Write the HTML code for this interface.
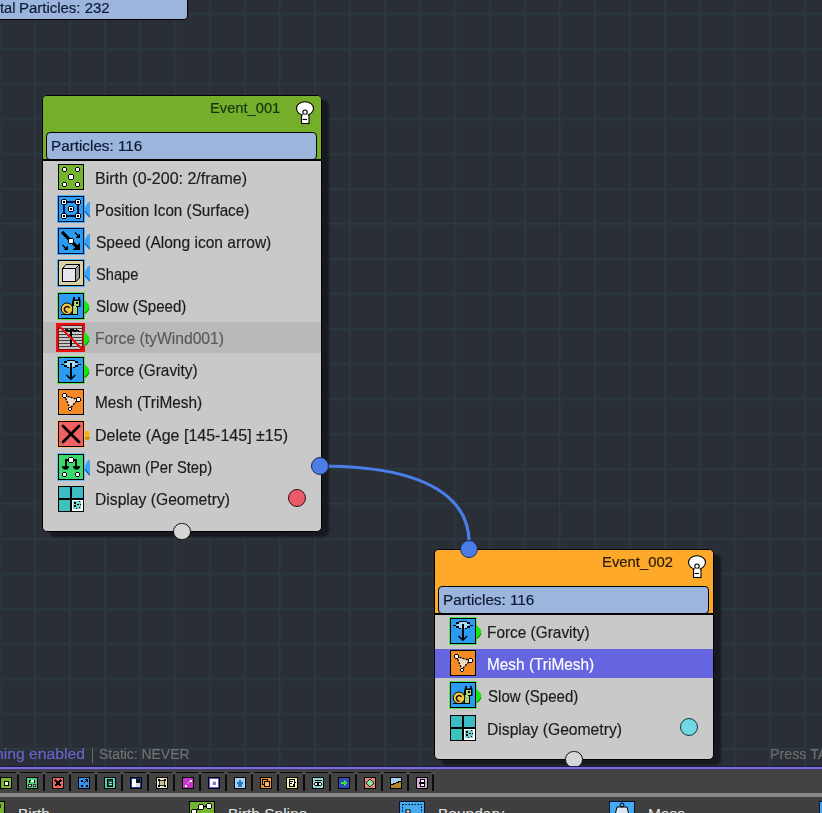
<!DOCTYPE html>
<html><head><meta charset="utf-8"><style>
html,body{margin:0;padding:0;}
body{width:822px;height:813px;overflow:hidden;position:relative;background:#2a2f37;font-family:"Liberation Sans", sans-serif;}
.grid{position:absolute;left:0;top:0;width:822px;height:767px;
 background-image:
  linear-gradient(to right, #2c3b3f 0, #2c3b3f 1px, #29333a 1px, #29333a 3px, transparent 3px),
  linear-gradient(to bottom, #2c3b3f 0, #2c3b3f 1px, #29333a 1px, #29333a 3px, transparent 3px);
 background-size:35px 35px, 35px 35px;
 background-position:34px 0, 0 13px;}
.t{position:absolute;white-space:nowrap;line-height:normal;}
.ic{position:absolute;display:block;}
.ring{position:absolute;width:28px;height:28px;}
.shadow{position:absolute;background:rgba(14,16,20,0.7);border-radius:6px;filter:blur(1px);}
.node{position:absolute;box-sizing:border-box;border:1px solid #000;border-radius:5px;overflow:hidden;background:#c9c9c9;}
.hdr{position:absolute;left:0;top:0;right:0;height:64px;}
.pbox{position:absolute;left:3px;top:36px;width:271px;height:28px;box-sizing:border-box;border:1px solid #000;border-radius:4px;background:#9bb5dd;}
.list{position:absolute;left:0;right:0;top:63px;height:2px;background:#000;}
</style></head><body>
<div class="grid"></div>

<div style="position:absolute;left:-10px;top:-5px;width:198px;height:25px;box-sizing:border-box;background:#9bb5dd;border:1px solid #000;border-radius:4px;"></div>
<div class="t" style="left:18.72px;top:-1.45px;font-size:15.3px;color:#0d1a33;transform:scaleX(0.9773);transform-origin:0 0;-webkit-text-stroke:0.2px #0d1a33;">Particles: 232</div>
<div class="t" style="left:-0.50px;top:-1.45px;font-size:15.3px;color:#0d1a33;transform:scaleX(0.9519);transform-origin:0 0;-webkit-text-stroke:0.2px #0d1a33;">tal</div>
<div class="shadow" style="left:49px;top:100px;width:280px;height:437px"></div><div class="node" style="left:42px;top:95px;width:280px;height:437px"><div class="hdr" style="background:#74ae2a"></div><div class="pbox"></div><div class="list"></div></div>
<div style="position:absolute;left:43px;top:322px;width:278px;height:31px;background:#b9b9b9"></div>
<div class="t" style="left:210.04px;top:99.46px;font-size:15.4px;color:#163410;transform:scaleX(0.9551);transform-origin:0 0;-webkit-text-stroke:0.2px #163410;">Event_001</div>
<div class="t" style="left:50.80px;top:136.85px;font-size:15.3px;color:#0d1a33;transform:scaleX(0.9974);transform-origin:0 0;-webkit-text-stroke:0.2px #0d1a33;">Particles: 116</div>
<svg class="ic" style="left:58px;top:164px" width="26" height="26" viewBox="0 0 26 26"><rect x="0" y="0" width="26" height="26" fill="#000"/><rect x="1" y="1" width="24" height="24" fill="#74b42e"/><path shape-rendering="crispEdges" d="M5,3H8V4H9V7H8V8H5V7H4V4H5Z" fill="#000"/><rect x="5" y="4" width="3" height="3" fill="#fff"/><path shape-rendering="crispEdges" d="M18,3H21V4H22V7H21V8H18V7H17V4H18Z" fill="#000"/><rect x="18" y="4" width="3" height="3" fill="#fff"/><path shape-rendering="crispEdges" d="M11,10H15V11H16V15H15V16H11V15H10V11H11Z" fill="#000"/><rect x="11" y="11" width="4" height="4" fill="#fff"/><path shape-rendering="crispEdges" d="M5,18H8V19H9V22H8V23H5V22H4V19H5Z" fill="#000"/><rect x="5" y="19" width="3" height="3" fill="#fff"/><path shape-rendering="crispEdges" d="M18,18H21V19H22V22H21V23H18V22H17V19H18Z" fill="#000"/><rect x="18" y="19" width="3" height="3" fill="#fff"/></svg>
<div class="t" style="left:95.41px;top:169.34px;font-size:16.2px;color:#1c1c1c;transform:scaleX(0.9879);transform-origin:0 0;-webkit-text-stroke:0.18px #1c1c1c;">Birth (0-200: 2/frame)</div>
<div class="ring" style="left:57px;top:195px;background:#4aaef2"></div><svg class="ic" style="left:58px;top:196px" width="26" height="26" viewBox="0 0 26 26"><rect x="0" y="0" width="26" height="26" fill="#001040"/><rect x="1" y="1" width="24" height="24" fill="#2c9cf0"/><rect x="8" y="5" width="10" height="2" fill="#001040"/><rect x="8" y="19" width="10" height="2" fill="#001040"/><rect x="5" y="8" width="2" height="10" fill="#001040"/><rect x="19" y="8" width="2" height="10" fill="#001040"/><path shape-rendering="crispEdges" d="M4,3H8V4H9V8H8V9H4V8H3V4H4Z" fill="#000"/><rect x="4" y="4" width="4" height="4" fill="#fff"/><rect x="5.0" y="5.0" width="2" height="2" fill="#000"/><path shape-rendering="crispEdges" d="M18,3H22V4H23V8H22V9H18V8H17V4H18Z" fill="#000"/><rect x="18" y="4" width="4" height="4" fill="#fff"/><rect x="19.0" y="5.0" width="2" height="2" fill="#000"/><path shape-rendering="crispEdges" d="M4,17H8V18H9V22H8V23H4V22H3V18H4Z" fill="#000"/><rect x="4" y="18" width="4" height="4" fill="#fff"/><rect x="5.0" y="19.0" width="2" height="2" fill="#000"/><path shape-rendering="crispEdges" d="M18,17H22V18H23V22H22V23H18V22H17V18H18Z" fill="#000"/><rect x="18" y="18" width="4" height="4" fill="#fff"/><rect x="19.0" y="19.0" width="2" height="2" fill="#000"/><path shape-rendering="crispEdges" d="M11,10H15V11H16V15H15V16H11V15H10V11H11Z" fill="#000"/><rect x="11" y="11" width="4" height="4" fill="#fff"/><rect x="12.0" y="12.0" width="2" height="2" fill="#000"/></svg>
<svg class="ic" style="left:84px;top:202px" width="7" height="16" viewBox="0 0 7 16"><path d="M4,0.3H6V15.2Q3,12 0.8,9V6Z" fill="#3aa2f4"/><path d="M1,9.3Q3.2,12.3 5.8,15.2" stroke="#0a58b0" stroke-width="1.1" fill="none"/></svg>
<div class="t" style="left:95.46px;top:201.34px;font-size:16.2px;color:#1c1c1c;transform:scaleX(0.9424);transform-origin:0 0;-webkit-text-stroke:0.18px #1c1c1c;">Position Icon (Surface)</div>
<div class="ring" style="left:57px;top:227px;background:#4aaef2"></div><svg class="ic" style="left:58px;top:228px" width="26" height="26" viewBox="0 0 26 26"><rect x="0" y="0" width="26" height="26" fill="#001040"/><rect x="1" y="1" width="24" height="24" fill="#2c9cf0"/><path d="M4,5L5,4L11,10L10,11Z" fill="#000" stroke="#000" stroke-width="1.6"/><path d="M15,16L16,15L19.5,18.5L18.5,19.5Z" fill="#000" stroke="#000" stroke-width="1.6"/><path d="M22,14.5V22H14.5Z" fill="#000"/><path d="M17,4.5L20,7.5M4.5,17L7.5,20" stroke="#000" stroke-width="1.4"/><path d="M22,5.5V10H17.5Z M10,17.5V22H5.5Z" fill="#000"/><path shape-rendering="crispEdges" d="M11,10H15V11H16V15H15V16H11V15H10V11H11Z" fill="#000"/><rect x="11" y="11" width="4" height="4" fill="#fff"/></svg>
<svg class="ic" style="left:84px;top:234px" width="7" height="16" viewBox="0 0 7 16"><path d="M4,0.3H6V15.2Q3,12 0.8,9V6Z" fill="#3aa2f4"/><path d="M1,9.3Q3.2,12.3 5.8,15.2" stroke="#0a58b0" stroke-width="1.1" fill="none"/></svg>
<div class="t" style="left:96.40px;top:233.34px;font-size:16.2px;color:#1c1c1c;transform:scaleX(0.9596);transform-origin:0 0;-webkit-text-stroke:0.18px #1c1c1c;">Speed (Along icon arrow)</div>
<div class="ring" style="left:57px;top:259px;background:#4aaef2"></div><svg class="ic" style="left:58px;top:260px" width="26" height="26" viewBox="0 0 26 26"><rect x="0" y="0" width="26" height="26" fill="#000"/><rect x="1" y="1" width="24" height="24" fill="#d9d2a8"/><path d="M8,4.5H21.5L17.5,8.5H4.5Z" fill="#d6d6d6" stroke="#000" stroke-width="1"/><path d="M17.5,8.5L21.5,4.5V18L17.5,22Z" fill="#9c9c9c" stroke="#000" stroke-width="1"/><rect x="4" y="8" width="14" height="14" fill="#000"/><rect x="5" y="9" width="12" height="12" fill="#e9e5ec"/></svg>
<svg class="ic" style="left:84px;top:266px" width="7" height="16" viewBox="0 0 7 16"><path d="M4,0.3H6V15.2Q3,12 0.8,9V6Z" fill="#3aa2f4"/><path d="M1,9.3Q3.2,12.3 5.8,15.2" stroke="#0a58b0" stroke-width="1.1" fill="none"/></svg>
<div class="t" style="left:96.40px;top:265.34px;font-size:16.2px;color:#1c1c1c;transform:scaleX(0.9037);transform-origin:0 0;-webkit-text-stroke:0.18px #1c1c1c;">Shape</div>
<div class="ring" style="left:57px;top:292px;background:#5ae05a"></div><svg class="ic" style="left:58px;top:293px" width="26" height="26" viewBox="0 0 26 26"><rect x="0" y="0" width="26" height="26" fill="#000"/><rect x="1" y="1" width="24" height="24" fill="#2c9cf0"/><rect x="15" y="4" width="2" height="3" fill="#001030"/><rect x="20" y="4" width="2" height="3" fill="#001030"/><path d="M14.5,6.5H22.5V14H20V21.5H13.5V14Z" fill="#000"/><rect x="16" y="8" width="5" height="5" fill="#a8d67c"/><rect x="15" y="13" width="4" height="8" fill="#a8d67c"/><rect x="18" y="9" width="2" height="2" fill="#000"/><rect x="18" y="13" width="3" height="1" fill="#000"/><circle cx="9" cy="15.8" r="5.8" fill="#f4c640" stroke="#000" stroke-width="1"/><path d="M9.5,19.2A2.8,2.8 0 1 1 11.5,14.8" fill="none" stroke="#000" stroke-width="1.4"/><rect x="3" y="21" width="17" height="1" fill="#000"/></svg>
<svg class="ic" style="left:84px;top:299.5px" width="7" height="16" viewBox="0 0 7 16"><path d="M0,0Q4.5,3 5.5,6.5Q5,11 0,14Z" fill="#18e418"/><path d="M5.2,8.5Q3.8,11.5 0.8,13.5" stroke="#0a9a0a" stroke-width="1.2" fill="none"/></svg>
<div class="t" style="left:96.40px;top:297.34px;font-size:16.2px;color:#1c1c1c;transform:scaleX(0.9299);transform-origin:0 0;-webkit-text-stroke:0.18px #1c1c1c;">Slow (Speed)</div>
<svg class="ic" style="left:56px;top:323px" width="29" height="29" viewBox="0 0 29 29" shape-rendering="crispEdges"><rect x="0" y="0" width="29" height="29" fill="#ee1010"/><rect x="2" y="2" width="25" height="25" fill="#7a1010"/><rect x="3" y="3" width="23" height="23" fill="#c8c8c8"/><rect x="3" y="5" width="23" height="1.2" fill="#404040"/><rect x="3" y="8" width="23" height="1.2" fill="#404040"/><rect x="3" y="11" width="23" height="1.2" fill="#404040"/><rect x="3" y="14" width="23" height="1.2" fill="#404040"/><rect x="3" y="17" width="23" height="1.2" fill="#404040"/><rect x="3" y="20" width="23" height="1.2" fill="#404040"/><rect x="3" y="23" width="23" height="1.2" fill="#404040"/><path d="M7,9Q10,5.5 13,8Q16,5.5 19,8Q21,6 23,9" stroke="#000" stroke-width="1.6" fill="none"/><rect x="13.5" y="8" width="2" height="15" fill="#000"/><path d="M2.5,2.5L26.5,26.5" stroke="#ee1010" stroke-width="2.2"/></svg>
<svg class="ic" style="left:84px;top:331.5px" width="7" height="16" viewBox="0 0 7 16"><path d="M0,0Q4.5,3 5.5,6.5Q5,11 0,14Z" fill="#18e418"/><path d="M5.2,8.5Q3.8,11.5 0.8,13.5" stroke="#0a9a0a" stroke-width="1.2" fill="none"/></svg>
<div class="t" style="left:95.43px;top:328.94px;font-size:16.2px;color:#5a5a5a;transform:scaleX(0.9693);transform-origin:0 0;-webkit-text-stroke:0.18px #5a5a5a;">Force (tyWind001)</div>
<div class="ring" style="left:57px;top:356px;background:#5ae05a"></div><svg class="ic" style="left:58px;top:357px" width="26" height="26" viewBox="0 0 26 26"><rect x="0" y="0" width="26" height="26" fill="#000"/><rect x="1" y="1" width="24" height="24" fill="#2c9cf0"/><ellipse cx="13" cy="7.2" rx="6.2" ry="3.4" fill="#a6dcf8"/><rect x="9" y="3" width="8" height="1" fill="#000"/><rect x="6" y="4" width="3" height="2" fill="#000"/><rect x="17" y="4" width="3" height="2" fill="#000"/><rect x="6" y="8" width="3" height="2" fill="#000"/><rect x="17" y="8" width="3" height="2" fill="#000"/><rect x="9" y="10" width="2" height="1" fill="#000"/><rect x="15" y="10" width="2" height="1" fill="#000"/><rect x="3" y="7" width="3" height="1" fill="#000"/><rect x="20" y="7" width="3" height="1" fill="#000"/><rect x="12" y="6" width="2" height="16" fill="#000"/><path d="M8.5,18L12.8,22.3L17.2,18" stroke="#000" stroke-width="1.5" fill="none"/></svg>
<svg class="ic" style="left:84px;top:363.5px" width="7" height="16" viewBox="0 0 7 16"><path d="M0,0Q4.5,3 5.5,6.5Q5,11 0,14Z" fill="#18e418"/><path d="M5.2,8.5Q3.8,11.5 0.8,13.5" stroke="#0a9a0a" stroke-width="1.2" fill="none"/></svg>
<div class="t" style="left:95.45px;top:361.34px;font-size:16.2px;color:#1c1c1c;transform:scaleX(0.9509);transform-origin:0 0;-webkit-text-stroke:0.18px #1c1c1c;">Force (Gravity)</div>
<svg class="ic" style="left:58px;top:389px" width="26" height="26" viewBox="0 0 26 26"><rect x="0" y="0" width="26" height="26" fill="#000"/><rect x="1" y="1" width="24" height="24" fill="#f38a26"/><path d="M6.5,6.5L20,10.5L12,19.5Z" fill="#f2dcc4" stroke="#000" stroke-width="1.4" stroke-dasharray="2 1.2"/><path shape-rendering="crispEdges" d="M5,4H8V5H9V8H8V9H5V8H4V5H5Z" fill="#000"/><rect x="5" y="5" width="3" height="3" fill="#fff"/><path shape-rendering="crispEdges" d="M19,8H22V9H23V12H22V13H19V12H18V9H19Z" fill="#000"/><rect x="19" y="9" width="3" height="3" fill="#fff"/><path shape-rendering="crispEdges" d="M11,18H13V19H14V21H13V22H11V21H10V19H11Z" fill="#000"/><rect x="11" y="19" width="2" height="2" fill="#fff"/></svg>
<div class="t" style="left:95.45px;top:393.34px;font-size:16.2px;color:#1c1c1c;transform:scaleX(0.9503);transform-origin:0 0;-webkit-text-stroke:0.18px #1c1c1c;">Mesh (TriMesh)</div>
<div class="ring" style="left:57px;top:420px;background:#f2c070"></div><svg class="ic" style="left:58px;top:421px" width="26" height="26" viewBox="0 0 26 26"><rect x="0" y="0" width="26" height="26" fill="#000"/><rect x="1" y="1" width="24" height="24" fill="#f26262"/><path d="M5,5L21,21M21,5L5,21" stroke="#000" stroke-width="2.8" stroke-linecap="round"/></svg>
<svg class="ic" style="left:85px;top:431px" width="5" height="9" viewBox="0 0 5 9"><rect x="0" y="0" width="4.5" height="8.5" fill="#f6b414"/><rect x="0" y="6" width="4.5" height="2.5" fill="#c08a10"/></svg>
<div class="t" style="left:95.41px;top:426.34px;font-size:16.2px;color:#1c1c1c;transform:scaleX(0.9888);transform-origin:0 0;-webkit-text-stroke:0.18px #1c1c1c;">Delete (Age [145-145] ±15)</div>
<div class="ring" style="left:57px;top:453px;background:#6ab8f0"></div><svg class="ic" style="left:58px;top:454px" width="26" height="26" viewBox="0 0 26 26"><rect x="0" y="0" width="26" height="26" fill="#000"/><rect x="1" y="1" width="24" height="24" fill="#3ad86e"/><rect x="7" y="5" width="12" height="2" fill="#000"/><rect x="7" y="5" width="2" height="8" fill="#000"/><rect x="17" y="5" width="2" height="8" fill="#000"/><path d="M4,12.3H11V13.5L9,15.5H6L4,13.5Z M15,12.3H22V13.5L20,15.5H17L15,13.5Z" fill="#000"/><path shape-rendering="crispEdges" d="M11,3H15V4H16V8H15V9H11V8H10V4H11Z" fill="#000"/><rect x="11" y="4" width="4" height="4" fill="#fff"/><path shape-rendering="crispEdges" d="M5,18H8V19H9V22H8V23H5V22H4V19H5Z" fill="#000"/><rect x="5" y="19" width="3" height="3" fill="#fff"/><path shape-rendering="crispEdges" d="M18,18H21V19H22V22H21V23H18V22H17V19H18Z" fill="#000"/><rect x="18" y="19" width="3" height="3" fill="#fff"/></svg>
<svg class="ic" style="left:84px;top:460px" width="7" height="16" viewBox="0 0 7 16"><path d="M4,0.3H6V15.2Q3,12 0.8,9V6Z" fill="#3aa2f4"/><path d="M1,9.3Q3.2,12.3 5.8,15.2" stroke="#0a58b0" stroke-width="1.1" fill="none"/></svg>
<div class="t" style="left:96.40px;top:458.34px;font-size:16.2px;color:#1c1c1c;transform:scaleX(0.9084);transform-origin:0 0;-webkit-text-stroke:0.18px #1c1c1c;">Spawn (Per Step)</div>
<svg class="ic" style="left:58px;top:486px" width="26" height="26" viewBox="0 0 26 26"><rect x="0" y="0" width="26" height="26" fill="#000"/><rect x="1" y="1" width="11" height="11" fill="#3cbcc4"/><rect x="14" y="1" width="11" height="11" fill="#3cbcc4"/><rect x="1" y="14" width="11" height="11" fill="#3cc4bc"/><rect x="14" y="14" width="11" height="11" fill="#fff"/><rect x="15" y="15" width="8" height="8" fill="#78d0d0"/><rect x="16" y="16" width="2" height="2" fill="#000"/><rect x="16" y="19" width="2" height="2" fill="#000"/><rect x="19" y="18" width="2" height="1" fill="#000"/><rect x="21" y="15" width="1" height="1" fill="#000"/><rect x="22" y="18" width="1" height="1" fill="#000"/><rect x="21" y="21" width="1" height="1" fill="#000"/><rect x="18" y="22" width="1" height="1" fill="#000"/></svg>
<div class="t" style="left:95.43px;top:490.34px;font-size:16.2px;color:#1c1c1c;transform:scaleX(0.9679);transform-origin:0 0;-webkit-text-stroke:0.18px #1c1c1c;">Display (Geometry)</div>
<div style="position:absolute;left:288px;top:489px;width:18px;height:18px;box-sizing:border-box;border-radius:50%;background:#e85b6b;border:1px solid #3a1010"></div>
<div style="position:absolute;left:173.3px;top:523px;width:17.4px;height:17.4px;box-sizing:border-box;border-radius:50%;background:#d6d6d6;border:1.4px solid #111"></div>
<div class="shadow" style="left:441px;top:554px;width:280px;height:211px"></div><div class="node" style="left:434px;top:549px;width:280px;height:211px"><div class="hdr" style="background:#fea92a"></div><div class="pbox"></div><div class="list"></div></div>
<div style="position:absolute;left:435px;top:649px;width:278px;height:29px;background:#6565e0"></div>
<div class="t" style="left:602.04px;top:553.46px;font-size:15.4px;color:#2a1c06;transform:scaleX(0.9648);transform-origin:0 0;-webkit-text-stroke:0.2px #2a1c06;">Event_002</div>
<div class="t" style="left:442.80px;top:590.85px;font-size:15.3px;color:#0d1a33;transform:scaleX(0.9974);transform-origin:0 0;-webkit-text-stroke:0.2px #0d1a33;">Particles: 116</div>
<div class="ring" style="left:449px;top:617px;background:#5ae05a"></div><svg class="ic" style="left:450px;top:618px" width="26" height="26" viewBox="0 0 26 26"><rect x="0" y="0" width="26" height="26" fill="#000"/><rect x="1" y="1" width="24" height="24" fill="#2c9cf0"/><ellipse cx="13" cy="7.2" rx="6.2" ry="3.4" fill="#a6dcf8"/><rect x="9" y="3" width="8" height="1" fill="#000"/><rect x="6" y="4" width="3" height="2" fill="#000"/><rect x="17" y="4" width="3" height="2" fill="#000"/><rect x="6" y="8" width="3" height="2" fill="#000"/><rect x="17" y="8" width="3" height="2" fill="#000"/><rect x="9" y="10" width="2" height="1" fill="#000"/><rect x="15" y="10" width="2" height="1" fill="#000"/><rect x="3" y="7" width="3" height="1" fill="#000"/><rect x="20" y="7" width="3" height="1" fill="#000"/><rect x="12" y="6" width="2" height="16" fill="#000"/><path d="M8.5,18L12.8,22.3L17.2,18" stroke="#000" stroke-width="1.5" fill="none"/></svg>
<svg class="ic" style="left:476px;top:624.5px" width="7" height="16" viewBox="0 0 7 16"><path d="M0,0Q4.5,3 5.5,6.5Q5,11 0,14Z" fill="#18e418"/><path d="M5.2,8.5Q3.8,11.5 0.8,13.5" stroke="#0a9a0a" stroke-width="1.2" fill="none"/></svg>
<div class="t" style="left:487.45px;top:623.34px;font-size:16.2px;color:#1c1c1c;transform:scaleX(0.9509);transform-origin:0 0;-webkit-text-stroke:0.18px #1c1c1c;">Force (Gravity)</div>
<svg class="ic" style="left:450px;top:650px" width="26" height="26" viewBox="0 0 26 26"><rect x="0" y="0" width="26" height="26" fill="#000"/><rect x="1" y="1" width="24" height="24" fill="#f38a26"/><path d="M6.5,6.5L20,10.5L12,19.5Z" fill="#f2dcc4" stroke="#000" stroke-width="1.4" stroke-dasharray="2 1.2"/><path shape-rendering="crispEdges" d="M5,4H8V5H9V8H8V9H5V8H4V5H5Z" fill="#000"/><rect x="5" y="5" width="3" height="3" fill="#fff"/><path shape-rendering="crispEdges" d="M19,8H22V9H23V12H22V13H19V12H18V9H19Z" fill="#000"/><rect x="19" y="9" width="3" height="3" fill="#fff"/><path shape-rendering="crispEdges" d="M11,18H13V19H14V21H13V22H11V21H10V19H11Z" fill="#000"/><rect x="11" y="19" width="2" height="2" fill="#fff"/></svg>
<div class="t" style="left:487.45px;top:655.34px;font-size:16.2px;color:#ffffff;transform:scaleX(0.9503);transform-origin:0 0;-webkit-text-stroke:0.18px #ffffff;">Mesh (TriMesh)</div>
<div class="ring" style="left:449px;top:681px;background:#5ae05a"></div><svg class="ic" style="left:450px;top:682px" width="26" height="26" viewBox="0 0 26 26"><rect x="0" y="0" width="26" height="26" fill="#000"/><rect x="1" y="1" width="24" height="24" fill="#2c9cf0"/><rect x="15" y="4" width="2" height="3" fill="#001030"/><rect x="20" y="4" width="2" height="3" fill="#001030"/><path d="M14.5,6.5H22.5V14H20V21.5H13.5V14Z" fill="#000"/><rect x="16" y="8" width="5" height="5" fill="#a8d67c"/><rect x="15" y="13" width="4" height="8" fill="#a8d67c"/><rect x="18" y="9" width="2" height="2" fill="#000"/><rect x="18" y="13" width="3" height="1" fill="#000"/><circle cx="9" cy="15.8" r="5.8" fill="#f4c640" stroke="#000" stroke-width="1"/><path d="M9.5,19.2A2.8,2.8 0 1 1 11.5,14.8" fill="none" stroke="#000" stroke-width="1.4"/><rect x="3" y="21" width="17" height="1" fill="#000"/></svg>
<svg class="ic" style="left:476px;top:688.5px" width="7" height="16" viewBox="0 0 7 16"><path d="M0,0Q4.5,3 5.5,6.5Q5,11 0,14Z" fill="#18e418"/><path d="M5.2,8.5Q3.8,11.5 0.8,13.5" stroke="#0a9a0a" stroke-width="1.2" fill="none"/></svg>
<div class="t" style="left:488.40px;top:687.34px;font-size:16.2px;color:#1c1c1c;transform:scaleX(0.9299);transform-origin:0 0;-webkit-text-stroke:0.18px #1c1c1c;">Slow (Speed)</div>
<svg class="ic" style="left:450px;top:715px" width="26" height="26" viewBox="0 0 26 26"><rect x="0" y="0" width="26" height="26" fill="#000"/><rect x="1" y="1" width="11" height="11" fill="#3cbcc4"/><rect x="14" y="1" width="11" height="11" fill="#3cbcc4"/><rect x="1" y="14" width="11" height="11" fill="#3cc4bc"/><rect x="14" y="14" width="11" height="11" fill="#fff"/><rect x="15" y="15" width="8" height="8" fill="#78d0d0"/><rect x="16" y="16" width="2" height="2" fill="#000"/><rect x="16" y="19" width="2" height="2" fill="#000"/><rect x="19" y="18" width="2" height="1" fill="#000"/><rect x="21" y="15" width="1" height="1" fill="#000"/><rect x="22" y="18" width="1" height="1" fill="#000"/><rect x="21" y="21" width="1" height="1" fill="#000"/><rect x="18" y="22" width="1" height="1" fill="#000"/></svg>
<div class="t" style="left:487.43px;top:719.54px;font-size:16.2px;color:#1c1c1c;transform:scaleX(0.9679);transform-origin:0 0;-webkit-text-stroke:0.18px #1c1c1c;">Display (Geometry)</div>
<div style="position:absolute;left:680px;top:718px;width:18px;height:18px;box-sizing:border-box;border-radius:50%;background:#6fd8e4;border:1px solid #103a40"></div>
<div style="position:absolute;left:565.3px;top:751px;width:17.4px;height:17.4px;box-sizing:border-box;border-radius:50%;background:#d6d6d6;border:1.4px solid #111"></div>
<svg class="ic" style="left:0;top:0" width="822" height="813"><path d="M320,466 C481,466 469,539 469,548.5" stroke="#4a7de8" stroke-width="3.2" fill="none"/><circle cx="320" cy="466" r="8.5" fill="#4a7de8" stroke="#1a2a50" stroke-width="1"/><circle cx="469" cy="549" r="8.5" fill="#4a7de8" stroke="#1a2a50" stroke-width="1"/></svg>
<svg class="ic" style="left:294.5px;top:99.5px" width="20" height="26" viewBox="0 0 20 26"><rect x="6.5" y="15" width="7.5" height="8.5" fill="#fff" stroke="#000" stroke-width="1.1"/><path d="M7.5,19.5H12" stroke="#000" stroke-width="1.1"/><ellipse cx="10" cy="8.5" rx="8.5" ry="6.8" fill="#fff" stroke="#000" stroke-width="1.1"/><circle cx="10" cy="12.2" r="2.2" fill="#fff" stroke="#000" stroke-width="1.1"/><rect x="7.6" y="14.6" width="5.3" height="1.5" fill="#fff"/></svg>
<svg class="ic" style="left:686.5px;top:553.5px" width="20" height="26" viewBox="0 0 20 26"><rect x="6.5" y="15" width="7.5" height="8.5" fill="#fff" stroke="#000" stroke-width="1.1"/><path d="M7.5,19.5H12" stroke="#000" stroke-width="1.1"/><ellipse cx="10" cy="8.5" rx="8.5" ry="6.8" fill="#fff" stroke="#000" stroke-width="1.1"/><circle cx="10" cy="12.2" r="2.2" fill="#fff" stroke="#000" stroke-width="1.1"/><rect x="7.6" y="14.6" width="5.3" height="1.5" fill="#fff"/></svg>
<div class="t" style="left:-4.52px;top:744.76px;font-size:15.4px;color:#6666cc;transform:scaleX(1.0220);transform-origin:0 0;-webkit-text-stroke:0.15px #6666cc;">ning enabled</div>
<div style="position:absolute;left:91.6px;top:747.5px;width:1.4px;height:15px;background:#6c6c66"></div>
<div class="t" style="left:98.50px;top:744.94px;font-size:15.2px;color:#737373;transform:scaleX(0.9162);transform-origin:0 0;-webkit-text-stroke:0.15px #737373;">Static: NEVER</div>
<div class="t" style="left:770.05px;top:745.12px;font-size:15px;color:#6e6e6e;transform:scaleX(0.9500);transform-origin:0 0;-webkit-text-stroke:0.15px #6e6e6e;">Press TAB</div>
<div style="position:absolute;left:0;top:766px;width:822px;height:1px;background:#1c1a4c"></div>
<div style="position:absolute;left:0;top:767px;width:822px;height:2px;background:#7a70d4"></div>
<div style="position:absolute;left:0;top:769px;width:822px;height:1px;background:#3c3860"></div>
<div style="position:absolute;left:0;top:770px;width:822px;height:23px;background:#434343"></div>
<div style="position:absolute;left:0;top:793px;width:822px;height:4px;background:#888888"></div>
<div style="position:absolute;left:0;top:797px;width:822px;height:16px;background:#3f3f3f"></div>
<div style="position:absolute;left:0;top:772px;width:433px;height:1px;background:#0c0c0c"></div>
<div style="position:absolute;left:17px;top:772px;width:2px;height:19px;background:#0c0c0c"></div>
<svg class="ic" style="left:14px;top:771px" width="8" height="5" viewBox="0 0 8 5"><path d="M1.5,1.2H6.5L4,3.8Z" fill="#5a5a5a"/></svg>
<div style="position:absolute;left:43px;top:772px;width:2px;height:19px;background:#0c0c0c"></div>
<svg class="ic" style="left:40px;top:771px" width="8" height="5" viewBox="0 0 8 5"><path d="M1.5,1.2H6.5L4,3.8Z" fill="#5a5a5a"/></svg>
<div style="position:absolute;left:69px;top:772px;width:2px;height:19px;background:#0c0c0c"></div>
<svg class="ic" style="left:66px;top:771px" width="8" height="5" viewBox="0 0 8 5"><path d="M1.5,1.2H6.5L4,3.8Z" fill="#5a5a5a"/></svg>
<div style="position:absolute;left:95px;top:772px;width:2px;height:19px;background:#0c0c0c"></div>
<svg class="ic" style="left:92px;top:771px" width="8" height="5" viewBox="0 0 8 5"><path d="M1.5,1.2H6.5L4,3.8Z" fill="#5a5a5a"/></svg>
<div style="position:absolute;left:121px;top:772px;width:2px;height:19px;background:#0c0c0c"></div>
<svg class="ic" style="left:118px;top:771px" width="8" height="5" viewBox="0 0 8 5"><path d="M1.5,1.2H6.5L4,3.8Z" fill="#5a5a5a"/></svg>
<div style="position:absolute;left:147px;top:772px;width:2px;height:19px;background:#0c0c0c"></div>
<svg class="ic" style="left:144px;top:771px" width="8" height="5" viewBox="0 0 8 5"><path d="M1.5,1.2H6.5L4,3.8Z" fill="#5a5a5a"/></svg>
<div style="position:absolute;left:173px;top:772px;width:2px;height:19px;background:#0c0c0c"></div>
<svg class="ic" style="left:170px;top:771px" width="8" height="5" viewBox="0 0 8 5"><path d="M1.5,1.2H6.5L4,3.8Z" fill="#5a5a5a"/></svg>
<div style="position:absolute;left:199px;top:772px;width:2px;height:19px;background:#0c0c0c"></div>
<svg class="ic" style="left:196px;top:771px" width="8" height="5" viewBox="0 0 8 5"><path d="M1.5,1.2H6.5L4,3.8Z" fill="#5a5a5a"/></svg>
<div style="position:absolute;left:225px;top:772px;width:2px;height:19px;background:#0c0c0c"></div>
<svg class="ic" style="left:222px;top:771px" width="8" height="5" viewBox="0 0 8 5"><path d="M1.5,1.2H6.5L4,3.8Z" fill="#5a5a5a"/></svg>
<div style="position:absolute;left:251px;top:772px;width:2px;height:19px;background:#0c0c0c"></div>
<svg class="ic" style="left:248px;top:771px" width="8" height="5" viewBox="0 0 8 5"><path d="M1.5,1.2H6.5L4,3.8Z" fill="#5a5a5a"/></svg>
<div style="position:absolute;left:277px;top:772px;width:2px;height:19px;background:#0c0c0c"></div>
<svg class="ic" style="left:274px;top:771px" width="8" height="5" viewBox="0 0 8 5"><path d="M1.5,1.2H6.5L4,3.8Z" fill="#5a5a5a"/></svg>
<div style="position:absolute;left:303px;top:772px;width:2px;height:19px;background:#0c0c0c"></div>
<svg class="ic" style="left:300px;top:771px" width="8" height="5" viewBox="0 0 8 5"><path d="M1.5,1.2H6.5L4,3.8Z" fill="#5a5a5a"/></svg>
<div style="position:absolute;left:329px;top:772px;width:2px;height:19px;background:#0c0c0c"></div>
<svg class="ic" style="left:326px;top:771px" width="8" height="5" viewBox="0 0 8 5"><path d="M1.5,1.2H6.5L4,3.8Z" fill="#5a5a5a"/></svg>
<div style="position:absolute;left:355px;top:772px;width:2px;height:19px;background:#0c0c0c"></div>
<svg class="ic" style="left:352px;top:771px" width="8" height="5" viewBox="0 0 8 5"><path d="M1.5,1.2H6.5L4,3.8Z" fill="#5a5a5a"/></svg>
<div style="position:absolute;left:381px;top:772px;width:2px;height:19px;background:#0c0c0c"></div>
<svg class="ic" style="left:378px;top:771px" width="8" height="5" viewBox="0 0 8 5"><path d="M1.5,1.2H6.5L4,3.8Z" fill="#5a5a5a"/></svg>
<div style="position:absolute;left:407px;top:772px;width:2px;height:19px;background:#0c0c0c"></div>
<svg class="ic" style="left:404px;top:771px" width="8" height="5" viewBox="0 0 8 5"><path d="M1.5,1.2H6.5L4,3.8Z" fill="#5a5a5a"/></svg>
<div style="position:absolute;left:432px;top:772px;width:2px;height:19px;background:#0c0c0c"></div>
<svg class="ic" style="left:429px;top:771px" width="8" height="5" viewBox="0 0 8 5"><path d="M1.5,1.2H6.5L4,3.8Z" fill="#5a5a5a"/></svg>
<svg class="ic" style="left:0px;top:777px" width="12" height="12" viewBox="0 0 12 12" shape-rendering="crispEdges"><rect x="0.5" y="0.5" width="11" height="11" fill="#7ab232" stroke="#000" stroke-width="1"/><rect x="4" y="4" width="4" height="4" fill="#fff" stroke="#000" stroke-width="1"/></svg>
<svg class="ic" style="left:26px;top:777px" width="12" height="12" viewBox="0 0 12 12" shape-rendering="crispEdges"><rect x="0.5" y="0.5" width="11" height="11" fill="#52cc7e" stroke="#000" stroke-width="1"/><path d="M3.5,6V3.5H8.5V6" stroke="#000" fill="none"/><rect x="5" y="2.5" width="2.5" height="2.5" fill="#fff"/><rect x="2.5" y="7" width="2.5" height="2.5" fill="#fff" stroke="#000" stroke-width="0.8"/><rect x="7" y="7" width="2.5" height="2.5" fill="#fff" stroke="#000" stroke-width="0.8"/></svg>
<svg class="ic" style="left:52px;top:777px" width="12" height="12" viewBox="0 0 12 12" shape-rendering="crispEdges"><rect x="0.5" y="0.5" width="11" height="11" fill="#f26464" stroke="#000" stroke-width="1"/><path d="M3,3L9,9M9,3L3,9" stroke="#000" stroke-width="2"/></svg>
<svg class="ic" style="left:78px;top:777px" width="12" height="12" viewBox="0 0 12 12" shape-rendering="crispEdges"><rect x="0.5" y="0.5" width="11" height="11" fill="#3392f0" stroke="#000" stroke-width="1"/><rect x="2.5" y="2.5" width="2" height="2" fill="#000"/><rect x="2.5" y="7.5" width="2" height="2" fill="#000"/><rect x="7.5" y="7.5" width="2" height="2" fill="#000"/><path d="M6,6L9.5,2.5M7,2.5H9.5V5" stroke="#000" fill="none"/></svg>
<svg class="ic" style="left:104px;top:777px" width="12" height="12" viewBox="0 0 12 12" shape-rendering="crispEdges"><rect x="0.5" y="0.5" width="11" height="11" fill="#50d4be" stroke="#000" stroke-width="1"/><rect x="3.5" y="2.5" width="5" height="7" fill="#2a4a40" stroke="#000"/><path d="M4.5,5H7.5M4.5,7H7.5" stroke="#8ef0c0"/></svg>
<svg class="ic" style="left:130px;top:777px" width="12" height="12" viewBox="0 0 12 12" shape-rendering="crispEdges"><rect x="0.5" y="0.5" width="11" height="11" fill="#173c9c" stroke="#000" stroke-width="1"/><rect x="2" y="2" width="8" height="8" fill="#fff"/><rect x="6" y="2" width="4" height="4" fill="#111"/><rect x="2" y="6" width="4" height="4" fill="#fff"/><rect x="6" y="6" width="4" height="4" fill="#ddd"/></svg>
<svg class="ic" style="left:156px;top:777px" width="12" height="12" viewBox="0 0 12 12" shape-rendering="crispEdges"><rect x="0.5" y="0.5" width="11" height="11" fill="#e9e5c9" stroke="#000" stroke-width="1"/><circle cx="6" cy="6" r="3" fill="#c8c0a0" stroke="#000" stroke-width="0.8"/><rect x="2" y="2" width="2" height="2" fill="#000"/><rect x="8" y="2" width="2" height="2" fill="#000"/><rect x="2" y="8" width="2" height="2" fill="#000"/><rect x="8" y="8" width="2" height="2" fill="#000"/></svg>
<svg class="ic" style="left:182px;top:777px" width="12" height="12" viewBox="0 0 12 12" shape-rendering="crispEdges"><rect x="0.5" y="0.5" width="11" height="11" fill="#c636c6" stroke="#000" stroke-width="1"/><rect x="2.5" y="7.5" width="2" height="2" fill="#fff"/><rect x="7.5" y="2.5" width="2" height="2" fill="#fff"/><path d="M4.5,7.5L7.5,4.5" stroke="#f0a0f0"/></svg>
<svg class="ic" style="left:208px;top:777px" width="12" height="12" viewBox="0 0 12 12" shape-rendering="crispEdges"><rect x="0.5" y="0.5" width="11" height="11" fill="#6f4fd2" stroke="#000" stroke-width="1"/><rect x="3" y="3" width="6" height="6" fill="#ddd" stroke="#fff" stroke-width="1.5"/><rect x="4.5" y="4.5" width="3" height="3" fill="#8a70d8"/></svg>
<svg class="ic" style="left:234px;top:777px" width="12" height="12" viewBox="0 0 12 12" shape-rendering="crispEdges"><rect x="0.5" y="0.5" width="11" height="11" fill="#a6d2f2" stroke="#000" stroke-width="1"/><path d="M5,2.5H7V4.5H9V6.5L8,7.5V9.5H4V7.5L3,6.5V4.5H5Z" fill="#2c78c8"/></svg>
<svg class="ic" style="left:260px;top:777px" width="12" height="12" viewBox="0 0 12 12" shape-rendering="crispEdges"><rect x="0.5" y="0.5" width="11" height="11" fill="#f29232" stroke="#000" stroke-width="1"/><rect x="2.5" y="2.5" width="5" height="5" fill="none" stroke="#000"/><rect x="4.5" y="4.5" width="5" height="5" fill="#f6b060" stroke="#000"/></svg>
<svg class="ic" style="left:286px;top:777px" width="12" height="12" viewBox="0 0 12 12" shape-rendering="crispEdges"><rect x="0.5" y="0.5" width="11" height="11" fill="#f8f0a0" stroke="#000" stroke-width="1"/><path d="M3,2.5H8V9.5H3Z" fill="#fff" stroke="#000"/><path d="M4,4.5H7M4,6.5H6M7,9L9.5,5" stroke="#000"/></svg>
<svg class="ic" style="left:312px;top:777px" width="12" height="12" viewBox="0 0 12 12" shape-rendering="crispEdges"><rect x="0.5" y="0.5" width="11" height="11" fill="#94d8d6" stroke="#000" stroke-width="1"/><path d="M2.5,3H9.5" stroke="#000"/><ellipse cx="6" cy="7" rx="3.5" ry="2" fill="#fff" stroke="#000"/><circle cx="6" cy="7" r="1" fill="#000"/></svg>
<svg class="ic" style="left:338px;top:777px" width="12" height="12" viewBox="0 0 12 12" shape-rendering="crispEdges"><rect x="0.5" y="0.5" width="11" height="11" fill="#2f4cc4" stroke="#000" stroke-width="1"/><path d="M2.5,6H7" stroke="#3ae03a" stroke-width="2"/><path d="M6,2.5L9.5,6L6,9.5Z" fill="#3ae03a"/></svg>
<svg class="ic" style="left:364px;top:777px" width="12" height="12" viewBox="0 0 12 12" shape-rendering="crispEdges"><rect x="0.5" y="0.5" width="11" height="11" fill="#e48a7c" stroke="#000" stroke-width="1"/><path d="M6,2L10,6L6,10L2,6Z" fill="#90e0a0" stroke="#000" stroke-width="0.8"/></svg>
<svg class="ic" style="left:390px;top:777px" width="12" height="12" viewBox="0 0 12 12" shape-rendering="crispEdges"><rect x="0.5" y="0.5" width="11" height="11" fill="#b68424" stroke="#000" stroke-width="1"/><path d="M1,1H11V4L1,8Z" fill="#a8d0f0"/><path d="M1,8L11,4" stroke="#000"/></svg>
<svg class="ic" style="left:416px;top:777px" width="12" height="12" viewBox="0 0 12 12" shape-rendering="crispEdges"><rect x="0.5" y="0.5" width="11" height="11" fill="#d8a8d8" stroke="#000" stroke-width="1"/><rect x="4" y="2.5" width="4" height="7" fill="#fff" stroke="#000"/><path d="M3,6H9" stroke="#000" stroke-width="1.5"/></svg>
<svg class="ic" style="left:-21px;top:801px" width="26" height="26" viewBox="0 0 26 26"><rect x="0" y="0" width="26" height="26" fill="#000"/><rect x="1" y="1" width="24" height="24" fill="#74b42e"/><path shape-rendering="crispEdges" d="M5,2H9.2V3H10.2V7.2H9.2V8.2H5V7.2H4V3H5Z" fill="#000"/><rect x="5" y="3" width="4.2" height="4.2" fill="#fff"/><path shape-rendering="crispEdges" d="M17,2H21.2V3H22.2V7.2H21.2V8.2H17V7.2H16V3H17Z" fill="#000"/><rect x="17" y="3" width="4.2" height="4.2" fill="#fff"/><path shape-rendering="crispEdges" d="M10,9H15V10H16V15H15V16H10V15H9V10H10Z" fill="#000"/><rect x="10" y="10" width="5" height="5" fill="#fff"/></svg>
<svg class="ic" style="left:189px;top:801px" width="26" height="26" viewBox="0 0 26 26"><rect x="0" y="0" width="26" height="26" fill="#000"/><rect x="1" y="1" width="24" height="24" fill="#74b42e"/><path d="M5,11L12,6L20,5" stroke="#000" stroke-width="1.5" fill="none"/><path shape-rendering="crispEdges" d="M3,8H7V9H8V13H7V14H3V13H2V9H3Z" fill="#000"/><rect x="3" y="9" width="4" height="4" fill="#fff"/><path shape-rendering="crispEdges" d="M10,3H14V4H15V8H14V9H10V8H9V4H10Z" fill="#000"/><rect x="10" y="4" width="4" height="4" fill="#fff"/><path shape-rendering="crispEdges" d="M18,2H22V3H23V7H22V8H18V7H17V3H18Z" fill="#000"/><rect x="18" y="3" width="4" height="4" fill="#fff"/></svg>
<svg class="ic" style="left:399px;top:801px" width="26" height="26" viewBox="0 0 26 26"><rect x="0" y="0" width="26" height="26" fill="#02143a"/><rect x="1" y="1" width="24" height="24" fill="#44aaf2"/><rect x="3.5" y="3.5" width="19" height="19" fill="none" stroke="#000" stroke-dasharray="1.5 1.5"/><rect x="7" y="9" width="4" height="3" fill="#fff" stroke="#000"/></svg>
<svg class="ic" style="left:609px;top:801px" width="26" height="26" viewBox="0 0 26 26"><rect x="0" y="0" width="26" height="26" fill="#02143a"/><rect x="1" y="1" width="24" height="24" fill="#44aaf2"/><path d="M8,6H18L20,14H6Z" fill="#dde8f5" stroke="#000"/><circle cx="13" cy="4" r="2" fill="none" stroke="#000"/></svg>
<svg class="ic" style="left:819px;top:801px" width="26" height="26" viewBox="0 0 26 26"><rect x="0" y="0" width="26" height="26" fill="#02143a"/><rect x="1" y="1" width="24" height="24" fill="#44aaf2"/></svg>
<div class="t" style="left:18px;top:805.47px;font-size:15.5px;color:#e6e6e6;">Birth</div>
<div class="t" style="left:228px;top:805.47px;font-size:15.5px;color:#e6e6e6;">Birth Spline</div>
<div class="t" style="left:438px;top:805.47px;font-size:15.5px;color:#e6e6e6;">Boundary</div>
<div class="t" style="left:648px;top:805.47px;font-size:15.5px;color:#e6e6e6;">Mass</div>
</body></html>
